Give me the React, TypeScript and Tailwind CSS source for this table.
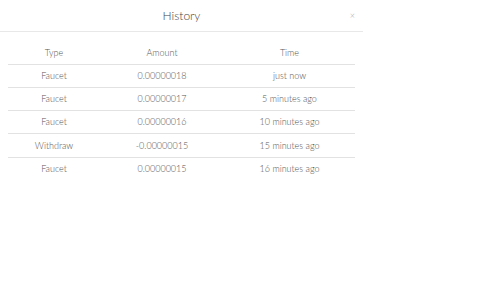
const rows = [
  { type: "Faucet", amount: "0.00000018", time: "just now" },
  { type: "Faucet", amount: "0.00000017", time: "5 minutes ago" },
  { type: "Faucet", amount: "0.00000016", time: "10 minutes ago" },
  { type: "Withdraw", amount: "-0.00000015", time: "15 minutes ago" },
  { type: "Faucet", amount: "0.00000015", time: "16 minutes ago" },
];

export default function App() {
  return (
    <div className="min-h-screen bg-white font-['Lato',sans-serif] font-light text-[#555]">
      <div className="w-[363px] bg-white">
        <div className="relative h-[32px] border-b border-[#e8e8e8] flex items-center justify-center">
          <h4 className="text-[12px] text-[#444]">History</h4>
          <button className="absolute right-[8px] top-[11px] text-[9px] leading-none text-[#aaa]">×</button>
        </div>

        <div className="px-2 pt-[9px]">
          <table className="w-[347px] table-fixed border-collapse text-[9px]">
            <thead>
              <tr className="h-[23px] border-b border-[#e2e2e2]">
                <th className="w-[92px] font-light">Type</th>
                <th className="w-[124px] font-light">Amount</th>
                <th className="font-light">Time</th>
              </tr>
            </thead>
            <tbody>
              {rows.map((r, i) => (
                <tr key={i} className={"h-[23.3px] " + (i > 0 ? "border-t border-[#e2e2e2]" : "")}>
                  <td className="text-center">{r.type}</td>
                  <td className="text-center">{r.amount}</td>
                  <td className="text-center">{r.time}</td>
                </tr>
              ))}
            </tbody>
          </table>
        </div>
      </div>
    </div>
  );
}
